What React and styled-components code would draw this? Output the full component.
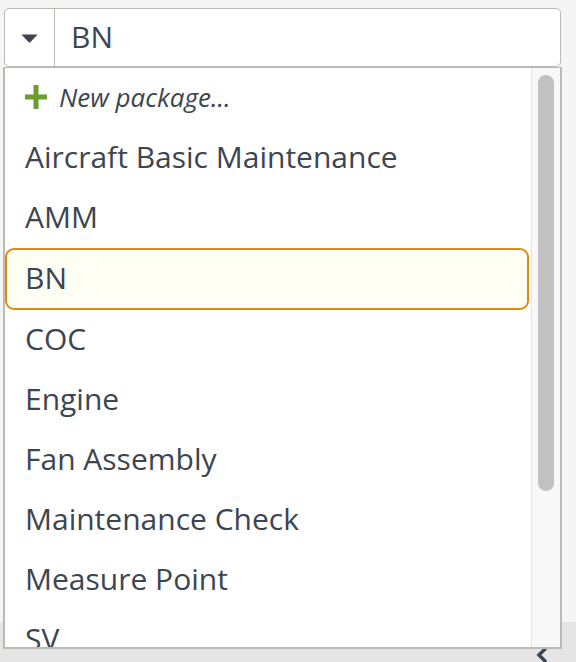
import styled, { createGlobalStyle } from "styled-components";

const GlobalStyle = createGlobalStyle`
  html, body {
    margin: 0;
    padding: 0;
    background: #f5f5f5;
  }
  * {
    box-sizing: border-box;
  }
`;

const Page = styled.div`
  width: 576px;
  height: 662px;
  display: flex;
  flex-direction: column;
  font-family: "Open Sans", "Liberation Sans", sans-serif;
  color: #3c4550;
  overflow: hidden;
`;

const Content = styled.div`
  flex: 1;
  padding: 8px 15px 0 4px;
`;

const Footer = styled.div`
  height: 40px;
  background: #e5e5e5;
  display: flex;
  justify-content: flex-end;
  padding: 26px 28px 0 0;
`;

const Select = styled.div`
  position: relative;
`;

const Control = styled.div`
  height: 59px;
  display: flex;
  align-items: stretch;
  background: #fff;
  border: 1.5px solid #bdb9b4;
  border-radius: 5px;
`;

const Toggle = styled.div`
  width: 50px;
  display: flex;
  align-items: center;
  justify-content: center;
  border-right: 1.5px solid #bdb9b4;
  padding-top: 2px;
`;

const Value = styled.div`
  flex: 1;
  display: flex;
  align-items: center;
  padding-left: 16px;
  padding-bottom: 2px;
  font-size: 30px;
`;

const Menu = styled.div`
  position: absolute;
  top: 59px;
  left: -1px;
  width: 559px;
  height: 582px;
  display: flex;
  background: #fff;
  border: 2px solid #bdb9b4;
  border-top-width: 1px;
`;

const Options = styled.ul`
  flex: 1;
  margin: 0;
  padding: 0;
  list-style: none;
  overflow: hidden;
`;

const Option = styled.li`
  height: ${(p) => (p.$active ? "62px" : "60px")};
  display: flex;
  align-items: center;
  gap: 12px;
  padding-left: ${(p) => (p.$active ? "18px" : "20px")};
  padding-bottom: 3px;
  font-size: ${(p) => (p.$italic ? "26px" : "30px")};
  font-style: ${(p) => (p.$italic ? "italic" : "normal")};
  white-space: nowrap;
  ${(p) =>
    p.$active &&
    `
    margin-right: 2px;
    background: #fffef5;
    border: 2px solid #e08a12;
    border-radius: 9px;
  `}
`;

const Track = styled.div`
  width: 29px;
  background: #f8f8f8;
  border-left: 1px solid #e4e4e4;
  padding: 7px 0 0 6px;
`;

const Thumb = styled.div`
  width: 16px;
  height: 416px;
  border-radius: 8px;
  background: #c1c1c1;
`;

const Caret = () => (
  <svg width="17" height="9" viewBox="0 0 17 9">
    <path d="M1 0.5 H16 Q16.6 0.5 16.2 1 L9.2 8.2 Q8.5 8.9 7.8 8.2 L0.8 1 Q0.4 0.5 1 0.5 Z" fill="#3c4550" />
  </svg>
);

const Plus = () => (
  <svg width="22" height="24" viewBox="0 0 22 24">
    <path d="M11 1.5 V22.5 M0.5 12 H21.5" stroke="#6b9c30" strokeWidth="5" strokeLinecap="round" />
  </svg>
);

const Chevron = () => (
  <svg width="12" height="16" viewBox="0 0 12 16">
    <path d="M9 1 L3 7 L9 13" stroke="#3c4550" strokeWidth="3.5" fill="none" strokeLinecap="round" />
  </svg>
);

const packages = [
  "Aircraft Basic Maintenance",
  "AMM",
  "BN",
  "COC",
  "Engine",
  "Fan Assembly",
  "Maintenance Check",
  "Measure Point",
  "SV",
];

export default function App() {
  const selected = "BN";
  return (
    <Page>
      <GlobalStyle />
      <Content>
        <Select>
          <Control>
            <Toggle>
              <Caret />
            </Toggle>
            <Value>{selected}</Value>
          </Control>
          <Menu>
            <Options>
              <Option $italic>
                <Plus />
                New package...
              </Option>
              {packages.map((name) => (
                <Option key={name} $active={name === selected}>
                  {name}
                </Option>
              ))}
            </Options>
            <Track>
              <Thumb />
            </Track>
          </Menu>
        </Select>
      </Content>
      <Footer>
        <Chevron />
      </Footer>
    </Page>
  );
}
